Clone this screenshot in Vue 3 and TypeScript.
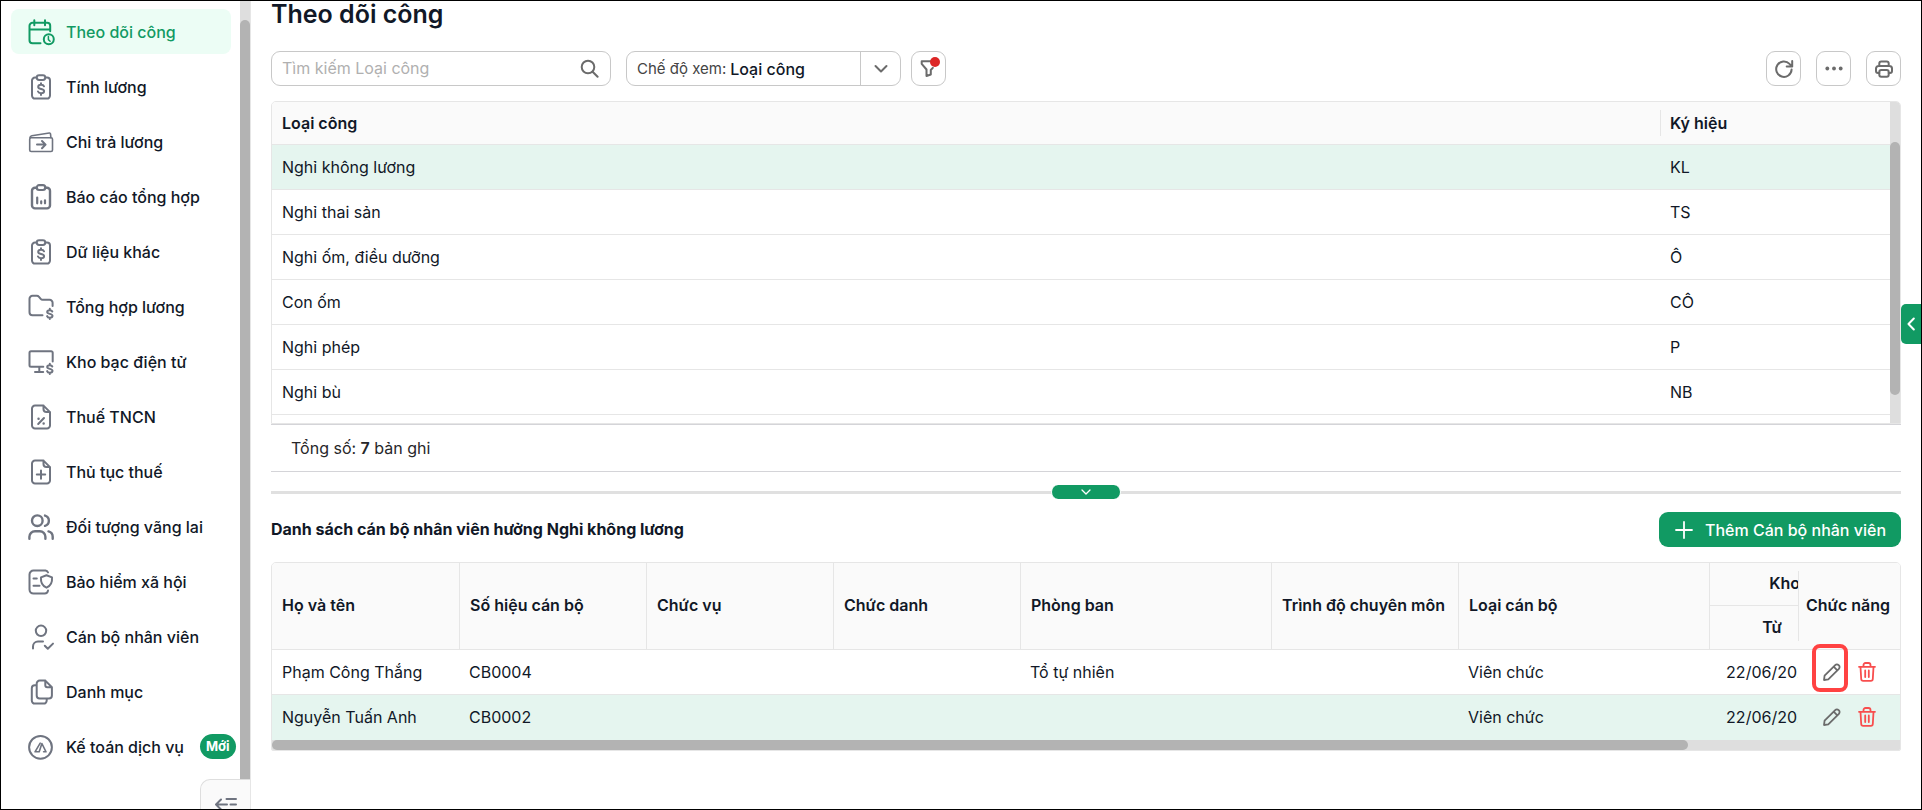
<script setup lang="ts">
import { ref } from 'vue'

interface MenuItem {
  label: string
  icon: string
  badge?: string
}

interface WorkType {
  name: string
  code: string
}

interface Employee {
  name: string
  code: string
  department: string
  kind: string
  from: string
}

const menu: MenuItem[] = [
  { label: 'Theo dõi công', icon: 'calendar' },
  { label: 'Tính lương', icon: 'clip-dollar' },
  { label: 'Chi trả lương', icon: 'wallet' },
  { label: 'Báo cáo tổng hợp', icon: 'report' },
  { label: 'Dữ liệu khác', icon: 'clip-dollar' },
  { label: 'Tổng hợp lương', icon: 'folder' },
  { label: 'Kho bạc điện tử', icon: 'monitor' },
  { label: 'Thuế TNCN', icon: 'file-percent' },
  { label: 'Thủ tục thuế', icon: 'file-plus' },
  { label: 'Đối tượng vãng lai', icon: 'users' },
  { label: 'Bảo hiểm xã hội', icon: 'shield' },
  { label: 'Cán bộ nhân viên', icon: 'user-check' },
  { label: 'Danh mục', icon: 'docs' },
  { label: 'Kế toán dịch vụ', icon: 'circle-a', badge: 'Mới' },
]

const workTypes: WorkType[] = [
  { name: 'Nghỉ không lương', code: 'KL' },
  { name: 'Nghỉ thai sản', code: 'TS' },
  { name: 'Nghỉ ốm, điều dưỡng', code: 'Ô' },
  { name: 'Con ốm', code: 'CÔ' },
  { name: 'Nghỉ phép', code: 'P' },
  { name: 'Nghỉ bù', code: 'NB' },
]

const employees: Employee[] = [
  { name: 'Phạm Công Thắng', code: 'CB0004', department: 'Tổ tự nhiên', kind: 'Viên chức', from: '22/06/2024' },
  { name: 'Nguyễn Tuấn Anh', code: 'CB0002', department: '', kind: 'Viên chức', from: '22/06/2024' },
]

const activeMenu = ref('Theo dõi công')
const selectedType = ref('KL')
const view = ref('type')
const search = ref('')
</script>

<template>
  <div class="page">
    <aside class="sidebar">
      <div class="sidebar-body">
        <nav class="menu" aria-label="Menu">
          <a
            v-for="item in menu"
            :key="item.label"
            href="#"
            class="menu-item"
            :class="{ active: item.label === activeMenu }"
            @click.prevent="activeMenu = item.label"
          >
            <svg class="menu-icon" viewBox="0 0 28 28" aria-hidden="true">
              <g v-if="item.icon === 'calendar'">
                <path d="M13.5 25.3H5.5a3 3 0 0 1-3-3V7.8a3 3 0 0 1 3-3h14.7a3 3 0 0 1 3 3v5.4M2.5 11.5h20.7M7.3 2.2v5M18 2.2v5" stroke-width="2" />
                <circle cx="21.8" cy="21.3" r="5" stroke-width="2" />
                <path d="M21.4 18.6v3l1.7 1.6" stroke-width="1.5" />
              </g>
              <g v-else-if="item.icon === 'clip-dollar'">
                <path d="M9.5 4.6H8a3 3 0 0 0-3 3v15a3 3 0 0 0 3 3h12a3 3 0 0 0 3-3v-15a3 3 0 0 0-3-3h-1.500" />
                <rect x="9.700" y="2.200" width="8.600" height="4.800" rx="2.400" />
                <path d="M17 13.300c-.4-1-1.500-1.500-2.900-1.500-1.700 0-2.900.8-2.900 2.100 0 2.900 5.900 1.300 5.900 4.200 0 1.400-1.300 2.200-3 2.200-1.500 0-2.700-.6-3.100-1.800M14 10.300v1.500M14 20.300v1.700" />
              </g>
              <g v-else-if="item.icon === 'wallet'" stroke-width="1.600">
                <rect x="2.700" y="9.700" width="22.800" height="13.800" rx="1.500" />
                <path d="M3 9.700c0-1.400.6-1.800 1.800-2L22.300 5c.7-.1 1.100.2 1.200.9l.4 3.800" />
                <path d="M10 16.600h8.300M15 13l3.600 3.600-3.600 3.600" stroke-width="2" />
              </g>
              <g v-else-if="item.icon === 'report'" stroke-width="2.400">
                <path d="M9.500 4.800H8a3 3 0 0 0-3 3v14.600a3 3 0 0 0 3 3h12a3 3 0 0 0 3-3V7.800a3 3 0 0 0-3-3h-1.500" />
                <rect x="9.700" y="2.200" width="8.600" height="4.800" rx="2.400" stroke-width="2.200" />
                <path d="M10.200 14.500v5.800M14.200 18.300v2M18 17.300v3" stroke-width="2.200" />
              </g>
              <g v-else-if="item.icon === 'folder'">
                <path d="M15.500 22.300H5.500a3 3 0 0 1-3-3V5.800a3 3 0 0 1 3-3h4.300c1 0 1.600.4 2.200 1.100l1.700 2c.6.700 1 .9 1.900.9h7a3 3 0 0 1 3 3V13" />
                <path d="M25.300 18.500c-.4-.9-1.300-1.300-2.500-1.300-1.600 0-2.600.7-2.600 1.800 0 2.500 5.300 1.200 5.300 3.800 0 1.200-1.100 1.900-2.700 1.900-1.300 0-2.400-.6-2.700-1.600M22.800 15.800v1.400M22.800 24.700V26" />
              </g>
              <g v-else-if="item.icon === 'monitor'">
                <path d="M16.300 18.700H4a1.500 1.500 0 0 1-1.500-1.500V4.800A1.500 1.500 0 0 1 4 3.300h20.200a1.500 1.500 0 0 1 1.500 1.500v8.700M12.300 18.700v5M8 23.900h8.200" />
                <path d="M25.300 18.500c-.4-.9-1.300-1.300-2.500-1.300-1.600 0-2.600.7-2.600 1.800 0 2.500 5.300 1.200 5.300 3.800 0 1.200-1.100 1.900-2.700 1.900-1.300 0-2.400-.6-2.700-1.600M22.800 15.800v1.400M22.800 24.700V26" />
              </g>
              <g v-else-if="item.icon === 'file-percent'">
                <path d="M16.500 2.600H8a3 3 0 0 0-3 3v16.800a3 3 0 0 0 3 3h12a3 3 0 0 0 3-3V9.100zM16.500 2.600V6.100a3 3 0 0 0 3 3H23M11.200 21l5.800-6" />
                <path d="M11.500 15.700h.1M16.600 20.500h.1" stroke-width="2.400" />
              </g>
              <g v-else-if="item.icon === 'file-plus'">
                <path d="M16.500 2.600H8a3 3 0 0 0-3 3v16.800a3 3 0 0 0 3 3h12a3 3 0 0 0 3-3V9.100zM16.500 2.600V6.100a3 3 0 0 0 3 3H23M9.800 16.600h8.400M14 12.400v8.400" />
              </g>
              <g v-else-if="item.icon === 'users'" stroke-width="2.400">
                <circle cx="10.300" cy="7.700" r="5.300" />
                <path d="M2.400 25.800v-2a5.600 5.600 0 0 1 5.600-5.600h4.800a5.600 5.600 0 0 1 5.600 5.600v2M18 2.600a5.300 5.300 0 0 1 0 10.200M25.700 25.800v-2a5.600 5.600 0 0 0-4.200-5.400" />
              </g>
              <g v-else-if="item.icon === 'shield'">
                <path d="M21 4.400a3.500 3.500 0 0 0-2.500-1.800H6.500a4 4 0 0 0-4 4v15a4 4 0 0 0 4 4h11.200a3.500 3.500 0 0 0 3.300-3" />
                <path d="M6.500 10.400h3.300M6.500 17.800h6" />
                <path d="M19.500 7.200l5.500 2.200c.4 4.500-1.200 8.500-5.500 10.300-4.300-1.800-5.900-5.800-5.500-10.300z" />
              </g>
              <g v-else-if="item.icon === 'user-check'">
                <circle cx="14" cy="7.800" r="5.200" />
                <path d="M6 25.500v-2a5 5 0 0 1 5-5h5M17.800 22.800l3 3 5.200-5.200" />
              </g>
              <g v-else-if="item.icon === 'docs'">
                <path d="M18.300 2.600h-5.600a3 3 0 0 0-3 3v12a3 3 0 0 0 3 3h9.200a3 3 0 0 0 3-3V9.200zM18.300 2.600v4.600a2 2 0 0 0 2 2h4.600M9.500 7.300H7.800a3 3 0 0 0-3 3v12.300a3 3 0 0 0 3 3h8.900a3 3 0 0 0 3-3v-1.800" />
              </g>
              <g v-else>
                <circle cx="13.500" cy="14.300" r="11.400" />
                <path d="M13.200 10.200L8 18.800h4.200L14.900 10.500L19 18.800h-2.400" stroke-width="1.600" />
              </g>
            </svg>
            <span>{{ item.label }}</span>
            <span v-if="item.badge" class="badge">{{ item.badge }}</span>
          </a>
        </nav>
        <div class="v-track menu-track"><div class="v-thumb"></div></div>
      </div>
      <div class="sidebar-foot">
        <button type="button" class="collapse" aria-label="Thu gọn">
          <svg viewBox="0 0 22 16" aria-hidden="true"><path d="M1.500 8.500H12M6 3.500l-5 5 5 5M11.500 3h9.500M15.500 8.500H21M11.500 14h9.500" /></svg>
        </button>
      </div>
    </aside>

    <main class="content">
      <h1>Theo dõi công</h1>

      <div class="toolbar">
        <label class="search">
          <input v-model="search" type="text" placeholder="Tìm kiếm Loại công" aria-label="Tìm kiếm Loại công" />
          <svg viewBox="0 0 20 20" aria-hidden="true"><circle cx="9" cy="8" r="6.300" /><path d="M13.600 12.800l5 5" /></svg>
        </label>
        <div class="view">
          <label for="view">Chế độ xem:</label>
          <select id="view" v-model="view">
            <option value="type">Loại công</option>
          </select>
          <span class="caret">
            <svg viewBox="0 0 14 14" aria-hidden="true"><path d="M1.500 4L7 9.500 12.500 4" /></svg>
          </span>
        </div>
        <button type="button" class="square filter" aria-label="Lọc">
          <svg viewBox="0 0 20 20" aria-hidden="true"><path d="M13.800 8.800L11.800 11v4.500L7.500 17V10.500L2.700 4.800V2.300H12" /></svg>
          <span class="dot"></span>
        </button>
        <div class="actions">
          <button type="button" class="square" aria-label="Tải lại">
            <svg viewBox="0 0 20 20" aria-hidden="true"><path d="M17.600 10.500a7.700 7.700 0 1 1-2.100-5.600l2.700 2.600M18.200 2v5.500h-5.500" /></svg>
          </button>
          <button type="button" class="square" aria-label="Thêm thao tác">
            <svg viewBox="0 0 20 20" class="solid" aria-hidden="true"><circle cx="3.300" cy="9.500" r="1.900" /><circle cx="10" cy="9.500" r="1.900" /><circle cx="16.700" cy="9.500" r="1.900" /></svg>
          </button>
          <button type="button" class="square" aria-label="In">
            <svg viewBox="0 0 20 20" aria-hidden="true"><path d="M5.300 7V4.400a2 2 0 0 1 2-2h5.400a2 2 0 0 1 2 2V7M5.300 14H4a2 2 0 0 1-2-2V9.500A2.500 2.500 0 0 1 4.500 7h11A2.500 2.500 0 0 1 18 9.500V12a2 2 0 0 1-2 2h-1.300" /><rect x="5.300" y="11" width="9.400" height="6.800" rx="2" /></svg>
          </button>
        </div>
      </div>

      <section class="types">
        <table>
          <colgroup><col /><col class="code-col" /></colgroup>
          <thead>
            <tr><th>Loại công</th><th class="short-line">Ký hiệu</th></tr>
          </thead>
          <tbody>
            <tr v-for="t in workTypes" :key="t.code" :class="{ selected: t.code === selectedType }" @click="selectedType = t.code">
              <td>{{ t.name }}</td>
              <td>{{ t.code }}</td>
            </tr>
            <tr><td></td><td></td></tr>
          </tbody>
        </table>
        <div class="v-track"><div class="v-thumb types-thumb"></div></div>
      </section>

      <div class="summary"><span>Tổng số: <b>7</b> bản ghi</span></div>

      <div class="splitter">
        <button type="button" aria-label="Thu gọn danh sách">
          <svg viewBox="0 0 10 6" aria-hidden="true"><path d="M1 1l4 4 4-4" /></svg>
        </button>
      </div>

      <div class="list-head">
        <h2>Danh sách cán bộ nhân viên hưởng Nghỉ không lương</h2>
        <button type="button" class="add">
          <svg viewBox="0 0 18 18" aria-hidden="true"><path d="M9 1v16M1 9h16" /></svg>
          <span>Thêm Cán bộ nhân viên</span>
        </button>
      </div>

      <section class="staff">
        <div class="staff-scroll">
          <table>
            <colgroup>
              <col class="w-m" /><col class="w-m" /><col class="w-m" /><col class="w-m" /><col class="w-l" />
              <col class="w-m" /><col class="w-l" /><col class="w-s" /><col class="w-s" /><col class="w-fn" />
            </colgroup>
            <thead>
              <tr>
                <th rowspan="2" class="first">Họ và tên</th>
                <th rowspan="2">Số hiệu cán bộ</th>
                <th rowspan="2">Chức vụ</th>
                <th rowspan="2">Chức danh</th>
                <th rowspan="2">Phòng ban</th>
                <th rowspan="2">Trình độ chuyên môn</th>
                <th rowspan="2">Loại cán bộ</th>
                <th colspan="2" class="center">Khoảng thời gian</th>
                <th rowspan="2" class="pinned short-line">Chức năng</th>
              </tr>
              <tr class="sub">
                <th class="center">Từ</th>
                <th class="center">Đến</th>
              </tr>
            </thead>
            <tbody>
              <tr v-for="(e, i) in employees" :key="e.code" :class="{ selected: i === 1 }">
                <td>{{ e.name }}</td>
                <td>{{ e.code }}</td>
                <td></td>
                <td></td>
                <td>{{ e.department }}</td>
                <td></td>
                <td>{{ e.kind }}</td>
                <td class="center">{{ e.from }}</td>
                <td></td>
                <td class="pinned">
                  <div class="row-actions">
                    <button type="button" class="edit" :class="{ marked: i === 0 }" aria-label="Sửa">
                      <svg viewBox="0 0 20 20" aria-hidden="true"><path d="M2 18l.6-4.300L13.200 3.100a2.400 2.400 0 0 1 3.400 0l.3.300a2.400 2.400 0 0 1 0 3.400L6.300 17.400zM11.700 4.700l3.600 3.600" /></svg>
                    </button>
                    <button type="button" class="remove" aria-label="Xóa">
                      <svg viewBox="0 0 18 20" aria-hidden="true"><path d="M1 4.800h16M5.500 4.500V3a2 2 0 0 1 2-2h3a2 2 0 0 1 2 2v1.500M2.500 5l.7 12a2 2 0 0 0 2 1.900h7.600a2 2 0 0 0 2-1.900l.7-12M7.200 8.500v6.500M10.800 8.500v6.500" /></svg>
                    </button>
                  </div>
                </td>
              </tr>
            </tbody>
          </table>
        </div>
        <div class="h-track"><div class="h-thumb"></div></div>
      </section>
    </main>

    <button type="button" class="side-tab" aria-label="Mở bảng bên">
      <svg viewBox="0 0 8 14" aria-hidden="true"><path d="M6.800 1.500L1.500 7l5.300 5.500" /></svg>
    </button>
  </div>
</template>

<style>
body {
  margin: 0;
}
</style>

<style scoped>
.page {
  --green: #119a63;
  --line: #e6e6e6;
  --ink: #111827;
  --gray: #6b6b6b;
  position: relative;
  display: flex;
  box-sizing: border-box;
  height: 100vh;
  overflow: hidden;
  border: 1px solid #000;
  background: #fff;
  color: var(--ink);
  font: 16px/24px Inter, "Noto Sans", sans-serif;
}
.page *,
.page *::before {
  box-sizing: border-box;
}
button,
input,
select {
  margin: 0;
  padding: 0;
  border: 0;
  background: none;
  color: inherit;
  font: inherit;
}
button {
  cursor: pointer;
}
svg {
  flex: none;
  fill: none;
  stroke: currentColor;
  stroke-linecap: round;
  stroke-linejoin: round;
}

/* Sidebar */
.sidebar {
  display: flex;
  flex: none;
  flex-direction: column;
  width: 250px;
  border-right: 1px solid var(--line);
}
.sidebar-body {
  display: flex;
  flex: 1;
  min-height: 0;
}
.menu {
  display: flex;
  flex: 1;
  flex-direction: column;
  gap: 10px;
  min-width: 0;
  padding: 8px 9px 8px 10px;
}
.menu-item {
  display: flex;
  flex: none;
  align-items: center;
  height: 45px;
  padding-left: 16px;
  border-radius: 8px;
  color: var(--ink);
  font-weight: 500;
  text-decoration: none;
  white-space: nowrap;
}
.menu-item.active {
  background: #ecfdf5;
  color: var(--green);
}
.menu-icon {
  width: 28px;
  height: 28px;
  margin-right: 11px;
  color: #6f7480;
  stroke-width: 2;
}
.active .menu-icon {
  color: var(--green);
}
.badge {
  margin-left: 16px;
  padding: 0 6px;
  border-radius: 13px;
  background: var(--green);
  color: #fff;
  font-size: 13px;
  font-weight: 700;
  line-height: 25px;
}
.v-track {
  flex: none;
  width: 10px;
  background: #dedede;
}
.v-thumb {
  height: 100%;
  border-radius: 5px;
  background: #b3b3b3;
}
.menu-track {
  padding-top: 19px;
}
.menu-track .v-thumb {
  border-radius: 5px 5px 0 0;
}
.sidebar-foot {
  display: flex;
  justify-content: flex-end;
  height: 30px;
  overflow: hidden;
}
.collapse {
  display: flex;
  align-items: center;
  justify-content: center;
  width: 50px;
  height: 50px;
  border: 1px solid #dedede;
  border-right: 0;
  border-radius: 10px 0 0 0;
  background: #fafafa;
  color: #6f7480;
}
.collapse svg {
  width: 22px;
  height: 16px;
  stroke-width: 2;
}

/* Main area */
.content {
  flex: 1;
  min-width: 0;
  padding: 0 20px;
}
h1 {
  height: 28px;
  margin: 0 0 22px;
  font-size: 25px;
  font-weight: 600;
  line-height: 26px;
}
.toolbar {
  display: flex;
  align-items: center;
  height: 35px;
  margin-bottom: 15px;
}
.search,
.view,
.square {
  display: flex;
  align-items: center;
  height: 35px;
  border: 1px solid #c8c8c8;
  border-radius: 9px;
}
.search {
  width: 340px;
  margin-right: 15px;
  padding: 0 11px 0 10px;
}
.search input {
  flex: 1;
  min-width: 0;
  padding-bottom: 2px;
  outline: 0;
}
.search input::placeholder {
  color: #b0b0b0;
  opacity: 1;
}
.search svg {
  width: 20px;
  height: 20px;
  color: var(--gray);
  stroke-width: 2;
}
.view {
  width: 275px;
  margin-right: 10px;
  padding-left: 10px;
}
.view label {
  margin-right: 4px;
  color: #444;
  font-size: 15px;
}
.view select {
  flex: 1;
  min-width: 0;
  height: 100%;
  appearance: none;
  outline: 0;
  font-weight: 500;
}
.caret {
  display: flex;
  align-items: center;
  justify-content: center;
  width: 40px;
  height: 100%;
  border-left: 1px solid #c8c8c8;
  color: var(--gray);
  pointer-events: none;
}
.caret svg {
  width: 14px;
  height: 14px;
  stroke-width: 2;
}
.square {
  position: relative;
  justify-content: center;
  width: 35px;
  color: var(--gray);
}
.square svg {
  width: 20px;
  height: 20px;
  stroke-width: 2;
}
.square svg.solid {
  fill: currentColor;
  stroke: none;
}
.dot {
  position: absolute;
  top: 5px;
  right: 5px;
  width: 10px;
  height: 10px;
  border-radius: 50%;
  background: #dc2626;
}
.actions {
  display: flex;
  gap: 15px;
  margin-left: auto;
}

/* Tables */
table {
  width: 100%;
  table-layout: fixed;
  border-spacing: 0;
}
th,
td {
  height: 45px;
  padding: 0 10px;
  border-bottom: 1px solid var(--line);
  text-align: left;
  white-space: nowrap;
}
th {
  background: #fafafa;
  font-weight: 600;
}
.selected td {
  background: #e5f5ef;
}
.center {
  text-align: center;
}
.short-line {
  position: relative;
}
.short-line::before {
  content: "";
  position: absolute;
  top: 8px;
  bottom: 8px;
  left: 0;
  border-left: 1px solid var(--line);
}
.types {
  display: flex;
  align-items: flex-start;
  height: 323px;
  overflow: hidden;
  border: 1px solid var(--line);
  border-radius: 5px 5px 0 0;
}
.types th {
  height: 43px;
}
.code-col {
  width: 230px;
}
.types .v-track {
  height: 100%;
  padding-top: 40px;
}
.types-thumb {
  height: 90%;
}
.summary {
  display: flex;
  align-items: center;
  height: 48px;
  padding-left: 20px;
  border-top: 1px solid #d4d4d8;
  border-bottom: 1px solid #d4d4d8;
  color: #27272a;
}
b {
  font-weight: 600;
}
.splitter {
  display: flex;
  align-items: center;
  justify-content: center;
  height: 14px;
  margin: 13px 0;
  background: linear-gradient(#e0e0e0, #e0e0e0) center / 100% 3px no-repeat;
}
.splitter button {
  display: flex;
  align-items: center;
  justify-content: center;
  width: 70px;
  height: 14px;
  border: solid #fff;
  border-width: 0 1px;
  border-radius: 8px;
  background: var(--green);
  color: #fff;
}
.splitter svg {
  width: 10px;
  height: 6px;
  stroke-width: 1.3;
}
.list-head {
  display: flex;
  align-items: center;
  justify-content: space-between;
  margin-bottom: 15px;
}
h2 {
  margin: 0;
  padding-bottom: 2px;
  font-size: 16px;
  font-weight: 700;
  line-height: 24px;
}
.add {
  display: flex;
  align-items: center;
  gap: 12px;
  height: 35px;
  padding: 0 15px 0 16px;
  border-radius: 9px;
  background: var(--green);
  color: #fff;
  font-weight: 500;
}
.add svg {
  width: 18px;
  height: 18px;
  stroke-width: 1.8;
}
.staff {
  overflow: hidden;
  border: 1px solid var(--line);
  border-radius: 5px 5px 2px 2px;
}
.staff-scroll {
  overflow-x: auto;
  scrollbar-width: none;
}
.staff table {
  width: 1789px;
}
.staff th {
  height: 43px;
  padding-bottom: 2px;
  border-left: 1px solid var(--line);
}
.staff .sub th {
  height: 44px;
}
.staff th.first,
.staff th.pinned {
  border-left: 0;
}
.staff tbody tr:last-child td {
  padding-bottom: 1px;
  border-bottom: 0;
}
.w-s {
  width: 125px;
}
.w-m {
  width: 187px;
}
.w-l {
  width: 251px;
}
.w-fn {
  width: 102px;
}
.staff .pinned {
  position: sticky;
  right: 0;
  z-index: 1;
  padding-right: 8px;
  padding-left: 8px;
}
tr:not(.selected) td.pinned {
  background: #fff;
}
.row-actions {
  display: flex;
  align-items: center;
  gap: 15px;
  padding-left: 16px;
}
.row-actions button {
  position: relative;
  display: flex;
}
.row-actions svg {
  width: 20px;
  height: 20px;
  stroke-width: 1.8;
}
.edit {
  color: var(--gray);
}
.remove {
  color: #f84e4e;
}
.marked::before {
  content: "";
  position: absolute;
  top: -18px;
  left: -10px;
  width: 36px;
  height: 48px;
  border: 4px solid #ff4242;
  border-radius: 8px;
}
.h-track {
  height: 10px;
  background: #dedede;
}
.h-thumb {
  width: 87%;
  height: 100%;
  border-radius: 5px;
  background: #b3b3b3;
}
.side-tab {
  position: absolute;
  top: 303px;
  right: 0;
  display: flex;
  align-items: center;
  justify-content: center;
  width: 20px;
  height: 40px;
  border-radius: 5px 0 0 5px;
  background: var(--green);
  color: #fff;
}
.side-tab svg {
  width: 8px;
  height: 14px;
  stroke-width: 2;
}
</style>
